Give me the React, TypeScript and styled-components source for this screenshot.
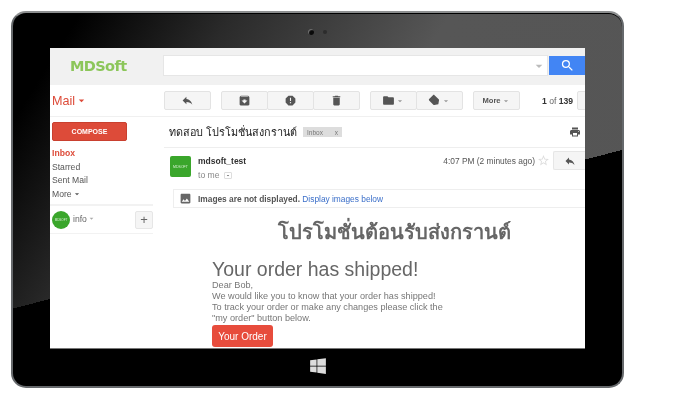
import { FC, ReactNode } from 'react'
import styled, { createGlobalStyle } from 'styled-components'
import { FaWindows } from 'react-icons/fa'
import {
  MdArchive,
  MdArrowDropDown,
  MdDelete,
  MdFolder,
  MdImage,
  MdLabel,
  MdPrint,
  MdReply,
  MdReport,
  MdSearch,
  MdStarBorder,
} from 'react-icons/md'

const THAI_STACK = '"Liberation Sans", "Noto Sans", "DejaVu Sans", sans-serif'

const GlobalStyle = createGlobalStyle`
  html, body {
    margin: 0;
    background: #fff;
  }
  * {
    box-sizing: border-box;
  }
`

const Page = styled.div`
  width: 692px;
  height: 413px;
  padding: 11px 0 0 11px;
  overflow: hidden;
  font-family: "Liberation Sans", Arial, sans-serif;
`

const Tablet = styled.div`
  width: 613px;
  height: 377px;
  display: flex;
  flex-direction: column;
  align-items: center;
  border: 2px solid #66696c;
  border-top-color: #8d8f90;
  border-radius: 15px;
  box-shadow: inset 0 1px 0 #000;
  background:
    linear-gradient(165.4deg, transparent 55.6%, #000 55.6%),
    linear-gradient(122deg, #000 8%, #2a2a2a 26%, #565656 52%, #555 100%);
`

const TopBezel = styled.div`
  height: 35px;
  flex: none;
  display: flex;
  align-items: center;
  justify-content: center;
  gap: 9px;
  padding: 2px 0 0;
`

const Lens = styled.span<{ $dim?: boolean }>`
  width: ${({ $dim }) => ($dim ? 4 : 6)}px;
  height: ${({ $dim }) => ($dim ? 4 : 6)}px;
  border-radius: 50%;
  background: ${({ $dim }) => ($dim ? '#2c2c2c' : '#0a0a0a')};
  box-shadow: ${({ $dim }) => ($dim ? 'none' : 'inset 1px 1px 1px #777')};
`

const BottomBezel = styled.div`
  flex: 1;
  display: flex;
  align-items: center;
  justify-content: center;
  color: #dcdcdc;
  padding: 0 0 3px;
  font-size: 18px;
`

const Screen = styled.div`
  width: 535px;
  height: 301px;
  flex: none;
  display: flex;
  flex-direction: column;
  overflow: hidden;
  background: #fff;
  color: #444;
  filter: blur(0.4px);
  border-bottom: 1px solid #777;
`

const Header = styled.header`
  height: 37px;
  flex: none;
  display: grid;
  grid-template-columns: 114px 1fr;
  align-items: center;
  padding-bottom: 2px;
  background: #f1f1f1;
`

const Logo = styled.div`
  padding-left: 20px;
  font-family: "DejaVu Sans", sans-serif;
  font-size: 14.5px;
  font-weight: 700;
  letter-spacing: -0.6px;
  color: #8cc65a;
`

const SearchRow = styled.div`
  display: flex;
  align-items: center;
`

const SearchBar = styled.div`
  flex: 1;
  height: 19px;
  display: flex;
  align-items: center;
  justify-content: flex-end;
  background: #fff;
  color: #bbb;
  box-shadow: 0 0 0 1px #e6e6e6;
`

const SearchButton = styled.button`
  width: 36px;
  height: 19px;
  margin-left: 2px;
  padding: 0;
  border: 0;
  display: flex;
  align-items: center;
  justify-content: center;
  background: #4285f4;
  color: #fff;
  font-size: 15px;
`

const ToolRow = styled.div`
  height: 32px;
  flex: none;
  display: grid;
  grid-template-columns: 114px 1fr;
  align-items: center;
  border-bottom: 1px solid #f0f0f0;
`

const MailLabel = styled.div`
  display: flex;
  align-items: center;
  padding-left: 2px;
  font-size: 12.6px;
  color: #dd4b39;
  svg {
    font-size: 13px;
  }
`

const Tools = styled.div`
  display: flex;
  align-items: center;
  white-space: nowrap;
`

const ToolGroup = styled.div<{ $gap?: number }>`
  display: flex;
  margin-right: ${({ $gap }) => $gap ?? 10}px;
`

const ToolButton = styled.button<{ $width?: number }>`
  width: ${({ $width }) => $width ?? 47}px;
  height: 19px;
  padding: 0;
  display: flex;
  align-items: center;
  justify-content: center;
  border: 1px solid #e3e3e3;
  margin-left: -1px;
  border-radius: 2px;
  background: #f5f5f5;
  color: #555;
  font: 700 7.6px "Liberation Sans", Arial, sans-serif;
  &:first-child {
    margin-left: 0;
  }
  svg {
    font-size: 13px;
  }
`

const DropCaret = styled(MdArrowDropDown)`
  && {
    font-size: 10px;
    color: #999;
  }
`

const TagIcon = styled(MdLabel)`
  transform: rotate(45deg);
`

const Pager = styled.div`
  width: 58px;
  padding-left: 22px;
  font-size: 8.6px;
  color: #666;
  b {
    color: #333;
  }
`

const Columns = styled.div`
  flex: 1;
  min-height: 0;
  display: grid;
  grid-template-columns: 114px 1fr;
`

const Sidebar = styled.aside`
  width: 103px;
  padding: 5px 0 0 2px;
  font-size: 8.6px;
`

const Compose = styled.button`
  width: 75px;
  height: 19px;
  padding: 0;
  margin-bottom: 5px;
  display: block;
  border: 1px solid #c9402f;
  border-radius: 2px;
  background: #dd4b39;
  color: #fff;
  font: 700 7px "Liberation Sans", Arial, sans-serif;
`

const NavItem = styled.div<{ $active?: boolean }>`
  height: 13.7px;
  display: flex;
  align-items: center;
  color: ${({ $active }) => ($active ? '#dd4b39' : '#555')};
  font-weight: ${({ $active }) => ($active ? 700 : 400)};
  svg {
    font-size: 10px;
  }
`

const Account = styled.div`
  height: 30px;
  margin: 3px 0 0 -2px;
  padding: 5px 0 0 2px;
  display: flex;
  align-items: flex-start;
  border-top: 2px solid #f2f2f2;
  border-bottom: 1px solid #f2f2f2;
  color: #666;
  svg {
    font-size: 9px;
    color: #aaa;
  }
`

const AccountName = styled.span`
  display: flex;
  align-items: center;
  flex: 1;
  margin: 3px 0 0 3px;
`

const AvatarCircle = styled.div`
  width: 18px;
  height: 18px;
  display: flex;
  align-items: center;
  justify-content: center;
  border-radius: 50%;
  background: #3aa62b;
  color: #d9f0d4;
  font-size: 3px;
`

const AddButton = styled.button`
  width: 18px;
  height: 18px;
  padding: 0 0 1px;
  border: 1px solid #e6e6e6;
  border-radius: 2px;
  background: #f5f5f5;
  color: #666;
  font: 400 13px/1 "Liberation Sans", Arial, sans-serif;
`

const Main = styled.main`
  min-width: 0;
`

const SubjectRow = styled.div`
  height: 31px;
  display: flex;
  align-items: center;
  padding: 0 4px 0 5px;
  border-bottom: 1px solid #eee;
`

const Subject = styled.h2`
  margin: 0;
  font-family: ${THAI_STACK};
  font-size: 10.8px;
  font-weight: 400;
  color: #222;
`

const Tag = styled.span`
  width: 39px;
  height: 10px;
  margin-left: 6px;
  display: flex;
  justify-content: space-between;
  align-items: center;
  padding: 0 4px;
  background: #ddd;
  color: #777;
  font-size: 6.5px;
`

const PrintSlot = styled.span`
  margin-left: auto;
  color: #555;
  font-size: 12px;
  display: flex;
`

const SenderRow = styled.div`
  height: 41px;
  display: flex;
  align-items: flex-start;
  padding: 3px 0 0 6px;
  white-space: nowrap;
`

const SquareAvatar = styled.div`
  width: 21px;
  height: 21px;
  margin: 5px 7px 0 0;
  display: flex;
  align-items: center;
  justify-content: center;
  border-radius: 2px;
  background: #3aa62b;
  color: #d9f0d4;
  font-size: 3.5px;
`

const SenderName = styled.div`
  margin-top: 5px;
  font-size: 8.5px;
  font-weight: 700;
  color: #333;
`

const ToMe = styled.div`
  display: flex;
  align-items: center;
  gap: 4px;
  margin-top: 4px;
  font-size: 8.6px;
  color: #888;
`

const Caret = styled.span`
  width: 8px;
  height: 7px;
  display: flex;
  align-items: center;
  justify-content: center;
  border: 1px solid #ddd;
  border-radius: 1px;
  font-size: 7px;
  color: #666;
`

const SentTime = styled.div`
  margin-left: auto;
  padding-top: 5px;
  font-size: 8.4px;
  color: #555;
`

const StarSlot = styled.span`
  width: 13px;
  margin: 3px 3px 0 2px;
  color: #ddd;
  font-size: 13px;
  display: flex;
`

const ReplyButton = styled.button`
  width: 32px;
  height: 19px;
  padding: 0 0 0 1px;
  display: flex;
  align-items: center;
  justify-content: center;
  border: 1px solid #e6e6e6;
  border-right: 0;
  border-radius: 2px 0 0 2px;
  background: #f5f5f5;
  color: #555;
  font-size: 12px;
`

const ImagesBar = styled.div`
  height: 19px;
  margin-left: 9px;
  display: flex;
  align-items: center;
  gap: 6px;
  padding-left: 5px;
  border: 1px solid #eee;
  border-right: 0;
  font-size: 8.35px;
  white-space: nowrap;
  color: #666;
  svg {
    font-size: 13px;
    color: #666;
  }
  b {
    color: #555;
  }
  a {
    color: #3b6fc9;
    font-weight: 400;
  }
`

const Promo = styled.h1`
  margin: 12px 0 0;
  padding-left: 40px;
  text-align: center;
  font-family: ${THAI_STACK};
  font-size: 20px;
  line-height: 24px;
  font-weight: 700;
  color: #666;
`

const Email = styled.div`
  padding: 14px 0 0 48px;
  width: 290px;
  box-sizing: content-box;
  font-size: 9.15px;
  line-height: 11.1px;
  color: #777;
`

const EmailTitle = styled.div`
  font-size: 19.5px;
  line-height: 22px;
  color: #666;
  white-space: nowrap;
`

const OrderButton = styled.button`
  display: block;
  width: 61px;
  height: 22px;
  margin-top: 1px;
  padding: 0;
  border: 0;
  border-radius: 3px;
  background: #e74c3c;
  color: #fff;
  font: 400 10px "Liberation Sans", Arial, sans-serif;
`

const ToolIcon: FC<{ width?: number; children: ReactNode }> = ({ width, children }) => (
  <ToolButton $width={width}>{children}</ToolButton>
)

const App: FC = () => {
  return (
    <Page>
      <GlobalStyle />
      <Tablet>
        <TopBezel>
          <Lens />
          <Lens $dim />
        </TopBezel>
        <Screen>
          <Header>
            <Logo>MDSoft</Logo>
            <SearchRow>
              <SearchBar>
                <MdArrowDropDown />
              </SearchBar>
              <SearchButton><MdSearch /></SearchButton>
            </SearchRow>
          </Header>
          <ToolRow>
            <MailLabel>
              Mail
              <MdArrowDropDown />
            </MailLabel>
            <Tools>
              <ToolGroup>
                <ToolIcon><MdReply /></ToolIcon>
              </ToolGroup>
              <ToolGroup>
                <ToolIcon><MdArchive /></ToolIcon>
                <ToolIcon><MdReport /></ToolIcon>
                <ToolIcon><MdDelete /></ToolIcon>
              </ToolGroup>
              <ToolGroup>
                <ToolIcon><MdFolder /><DropCaret /></ToolIcon>
                <ToolIcon><TagIcon /><DropCaret /></ToolIcon>
              </ToolGroup>
              <ToolGroup $gap={0}>
                <ToolIcon>More<DropCaret /></ToolIcon>
              </ToolGroup>
              <Pager>
                <b>1</b> of <b>139</b>
              </Pager>
              <ToolIcon width={20}>{null}</ToolIcon>
            </Tools>
          </ToolRow>
          <Columns>
            <Sidebar>
              <Compose>COMPOSE</Compose>
              <NavItem $active>Inbox</NavItem>
              <NavItem>Starred</NavItem>
              <NavItem>Sent Mail</NavItem>
              <NavItem>More<MdArrowDropDown /></NavItem>
              <Account>
                <AvatarCircle>MDSOFT</AvatarCircle>
                <AccountName>info<MdArrowDropDown /></AccountName>
                <AddButton>+</AddButton>
              </Account>
            </Sidebar>
            <Main>
              <SubjectRow>
                <Subject>ทดสอบ โปรโมชั่นสงกรานต์</Subject>
                <Tag>Inbox<span>x</span></Tag>
                <PrintSlot><MdPrint /></PrintSlot>
              </SubjectRow>
              <SenderRow>
                <SquareAvatar>MDSOFT</SquareAvatar>
                <div>
                  <SenderName>mdsoft_test</SenderName>
                  <ToMe>to me<Caret><MdArrowDropDown /></Caret></ToMe>
                </div>
                <SentTime>4:07 PM (2 minutes ago)</SentTime>
                <StarSlot><MdStarBorder /></StarSlot>
                <ReplyButton><MdReply /></ReplyButton>
              </SenderRow>
              <ImagesBar>
                <MdImage />
                <span><b>Images are not displayed.</b> <a>Display images below</a></span>
              </ImagesBar>
              <Promo>โปรโมชั่นต้อนรับส่งกรานต์</Promo>
              <Email>
                <EmailTitle>Your order has shipped!</EmailTitle>
                Dear Bob,
                <br />
                We would like you to know that your order has shipped!
                <br />
                To track your order or make any changes please click the
                <br />
                "my order" button below.
                <OrderButton>Your Order</OrderButton>
              </Email>
            </Main>
          </Columns>
        </Screen>
        <BottomBezel>
          <FaWindows />
        </BottomBezel>
      </Tablet>
    </Page>
  )
}

export default App
